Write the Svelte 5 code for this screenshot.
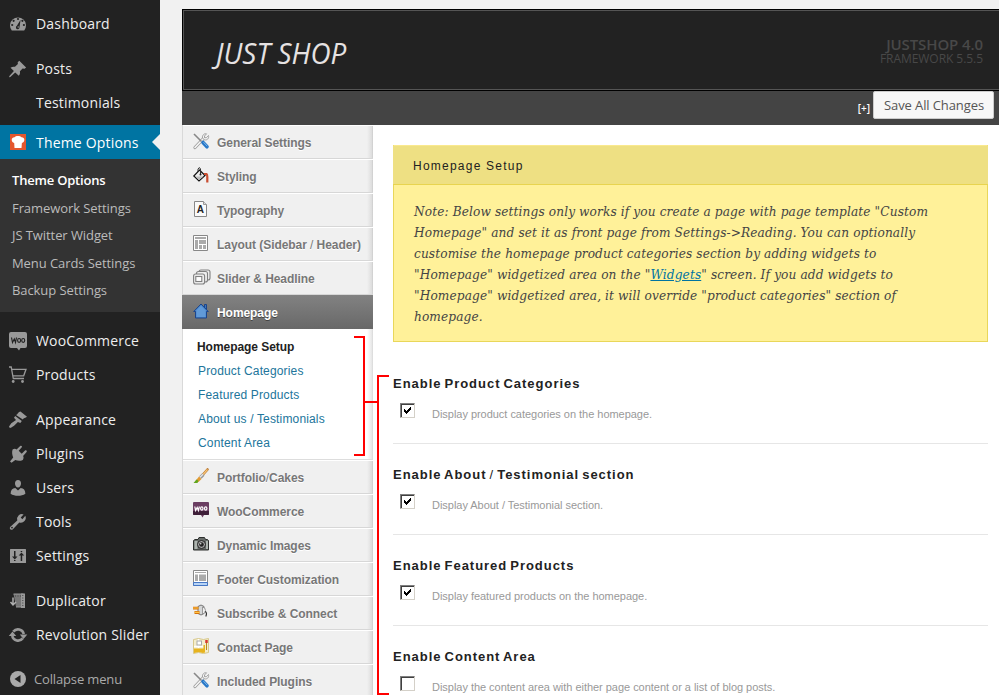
<script>
  const glyphs = {
    dashboard: '<path fill="#999" d="M3.800 16.500A8 8 0 1 1 16.200 16.500Z"/><g fill="#222"><circle cx="10" cy="5" r="1.100"/><circle cx="5.600" cy="6.800" r="1.100"/><circle cx="4.200" cy="11" r="1.100"/><circle cx="15.900" cy="11" r="1.100"/><circle cx="14.400" cy="6.800" r="1.100"/><path d="M12.600 5.800l-3.700 6a1.800 1.800 0 1 0 2.600 1.500z"/></g><circle cx="10.200" cy="13" r=".7" fill="#999"/>',
    pin: '<path fill="#999" d="M11.300 1.800l6.800 6.700-1.500 1.200-2-.2-2.700 2.800c.4 1.700 0 3.300-1.100 4.400L7.200 13.400l-4.900 4.500-1.200.3.300-1.200 4.500-4.900L2.500 8.800c1.300-1.100 3-1.400 4.500-1l2.900-2.700-.2-1.900z"/>',
    chef: '<path fill="#e4572e" d="M2 2h16v16H2z"/><path fill="#fff" d="M6.200 11C2.800 10 3 5.300 6.500 5.300c1.200-1.800 5.700-1.800 7 0 3.700 0 3.800 4.700.4 5.700l-.4 5h-7z"/>',
    woo: '<path fill="#999" d="M3 1h14q2 0 2 2v12q0 2-2 2h-4.500L11 19.500 9 17H3q-2 0-2-2V3q0-2 2-2z"/><g fill="none" stroke="#222" stroke-width="1.150"><path d="M3.500 6.500l1 5 1.800-3.600 1.200 3.600 1-5"/><ellipse cx="11.100" cy="9.400" rx="1.500" ry="1.900"/><ellipse cx="15.200" cy="9.400" rx="1.500" ry="1.900"/></g>',
    cart: '<g fill="none" stroke="#999" stroke-width="1.300"><path d="M1 2h2.200L5.300 13.500H16"/><path d="M3.700 4.300H18l-2.300 6.500H4.900"/></g><circle cx="5.200" cy="16.500" r="1.400" fill="#999"/><circle cx="14.500" cy="16.500" r="1.400" fill="#999"/>',
    brush: '<path fill="#999" d="M8 5c1.500-.3 2.400-3.500 4.500-3.600l6.500 5.300c-1.500 1.600-3.500.9-4.200 2.900zM7.200 6l6.600 5-1.500 2-2.400-1-4.100 4c-1.300.7-2.600 1.900-4 1.900L1 16.500l2.300-3.300L8 10 6 7.700z"/>',
    plug: '<path fill="#999" d="M4.600 5.500c1.500-1 3-.8 4-.1l3.600-3.500c1.200-.8 2.300.3 1.600 1.400l-3.100 3.500 3 3 3.300-3.200c1.200-.8 2.400.3 1.600 1.400l-3.500 3.900c.8 1.400.5 2.800-.3 4-2.700 1.300-5.500.8-7.500.2l-3.800 2.700-1.500-1.300 3.200-4c-1-2.800-1.500-5.400-.6-8z"/>',
    user: '<path fill="#999" d="M10 2c2 0 3 1.500 3 3.500S11.700 9.500 10 9.500 7 7.500 7 5.500 8 2 10 2zM7.300 10l2.700 2.500 2.700-2.500c3 .3 4.500 2 4.700 5.700-4 2.800-10.800 2.800-14.800 0 .2-3.700 1.700-5.400 4.700-5.700z"/>',
    wrench: '<path fill="#999" d="M17.300 3.800a4.900 4.900 0 0 1-6 6.700l-6.400 6.700c-2 1.700-4.200-.5-2.500-2.500l6.900-6.200a4.900 4.900 0 0 1 6.300-6.100L12.700 5.500l1.700 1.700z"/><circle cx="4" cy="15.600" r=".9" fill="#222"/>',
    sliders: '<path fill="#999" d="M2.500 3h15q.5 0 .5.500v13q0 .5-.5.500h-15q-.5 0-.5-.500v-13q0-.5.500-.5z"/><path fill="#222" d="M6 5h1.500v5.500h2L6.800 13.500 4 10.500h2zM6 14h1.500v1H6zM12.700 15V9.500h-2L13.500 6.500l2.700 3h-2V15zM12.700 5h1.500v1h-1.500z"/>',
    duplicator: '<path fill="#777" stroke="#999" d="M5.500 3h10v13H8"/><path fill="#999" d="M13 2.500h4V17h-4z"/><path stroke="#444" stroke-dasharray="1 1.500" d="M14.800 4v12M7 5h6"/><path fill="none" stroke="#b0b0b0" stroke-width="1.500" d="M5 6.500v7M2.500 11L5 14l3-3"/>',
    cycle: '<g fill="none" stroke="#999" stroke-width="2.600"><path d="M5.300 6.600A6 6 0 0 1 15.800 9M14.700 13.400A6 6 0 0 1 4.200 11"/></g><path fill="#999" d="M.8 11L4.500 6.500 8.200 11zM11.800 9.500h7.500L15.500 14z"/>',
    collapse: '<circle cx="10" cy="10" r="8" fill="#aaa"/><path fill="#222" d="M12.500 6v8L6.500 10z"/>'
  };

  const icons = {
    tools: '<path fill="none" stroke="#999" stroke-width="3.200" stroke-linecap="round" d="M2 14.500L10.500 5.500"/><path fill="none" stroke="#f4f4f4" stroke-width="1.700" stroke-linecap="round" d="M2 14.500L10.500 5.500"/><path fill="#f4f4f4" stroke="#999" stroke-width=".9" d="M13.500.8L11.500 3v1.700h2L15.500 2.500c.8 3-1.500 5-4 4.300L9.500 5C9 2.500 11 .2 13.500.8z"/><path stroke="#888" stroke-width="1.600" d="M1 1l7.500 7.500"/><path stroke="#2878c8" stroke-width="3.600" stroke-linecap="round" d="M10 9.500l4 4.300"/><path stroke="#82b8ea" d="M10.500 9.200l3.800 4"/>',
    paint: '<path fill="#eee" stroke="#111" stroke-width="1.200" d="M6.500 3L12 8.500 6 14 .8 9z"/><path fill="#bbb" d="M3 9.500h7.500L6 13z"/><path fill="none" stroke="#333" d="M5 5V2q1.500-3 2.500 0v5"/><circle cx="7.500" cy="7.500" r="1" fill="#222"/><path fill="none" stroke="#c94d31" stroke-width="2.200" d="M11 7h2.500q.8.500.8 3v5.500"/>',
    type: '<path fill="#fafafa" stroke="#888" d="M1.500.5h9l3 3v12h-12z"/><path fill="#ddd" stroke="#999" d="M10.500.5v3h3"/><text x="7.300" y="11.700" text-anchor="middle" font-family="Liberation Sans" font-size="10" font-weight="bold" fill="#222">A</text>',
    layout: '<path fill="#fff" stroke="#888" d="M.5.5h14v15H.5z"/><path fill="#aaa" d="M2 2h11v2H2zM2 5h3v9H2zM6 5h7v4H6zM6 10h3v4H6zM10 10h3v4h-3z"/>',
    slider: '<g fill="#eee" stroke="#808080" stroke-width="1.100"><rect x="6" y="1" width="11" height="10" rx="2"/><rect x="3.500" y="2.500" width="11" height="10.500" rx="2"/><rect x=".6" y="5" width="11" height="10" rx="2"/><rect x="2.800" y="7.500" width="6" height="5" fill="#fff"/></g>',
    home: '<path fill="#3e78bd" stroke="#1c458b" d="M11.500 1.500h2v5h-2z"/><path fill="#4b87cc" stroke="#1c458b" d="M8 1L15.300 8.500H13.500V15h-11V8.500H.7z"/><path fill="#78aee4" d="M8 2.700l4.500 4.500V14h-9V7.200z" opacity=".5"/>',
    brush: '<path stroke="#ba762d" stroke-width="2.600" stroke-linecap="round" d="M14.500 1.500L10 6.500"/><path stroke="#f6c476" stroke-width="1.200" d="M14.500 1.500L10 6.500"/><path stroke="#999" stroke-width="3.400" d="M10.300 6.500l-3 3"/><path stroke="#e5e5e5" stroke-width="1.300" d="M10 6.300l-3 3"/><path fill="#e29a33" d="M6 8.500l2.500 2.500L5.500 14l-3-1z"/><path fill="#62a51d" d="M3.500 11.500l2 1.200-1 2.300H.5z"/>',
    woo: '<path fill="#6b3d62" d="M1 0h14q1 0 1 1v11q0 1-1 1h-4l-1.500 2.500L8 13H1q-1 0-1-1V1q0-1 1-1z"/><path fill="#3f1f39" d="M0 9h16v3q0 1-1 1H1q-1 0-1-1z"/><g fill="none" stroke="#fff" stroke-width="1.200"><path d="M1.800 4.500l.8 4 1.600-3 1.200 3 1-4"/><ellipse cx="8.800" cy="6.500" rx="1.200" ry="1.600"/><ellipse cx="12.700" cy="6.500" rx="1.200" ry="1.600"/></g>',
    camera: '<path fill="#666b68" stroke="#2c2f2d" d="M.5 4.500L2 3.500h3L6 1.500h5.500l1 2h2l1 1v9.500H.5z"/><path fill="#aeb5b0" d="M1.500 5h3v8h-3zM13 5h2v8h-2z"/><circle cx="8.500" cy="8.500" r="4" fill="#aaa" stroke="#222"/><circle cx="8.500" cy="8.500" r="2.300" fill="#222"/><circle cx="7.700" cy="7.700" r=".8" fill="#ddd"/>',
    footer: '<path fill="#fff" stroke="#888" d="M.5.5h14v15H.5z"/><path fill="#aaa" d="M2 2h11v1H2zM2 4.500h3V11H2zM6 4.500h7V11H6z"/><path fill="#b8d4f5" stroke="#4677c5" d="M.5 12.500h14v3H.5z"/>',
    plug: '<path fill="#d4d6d7" stroke="#777" d="M5 2.500Q8-.5 11 2.500v7q-3 3-6 0z"/><path fill="#eee" stroke="#888" stroke-width=".8" d="M9.500 3q3 .5 3 3.500t-3 3.500z"/><path fill="none" stroke="#333" stroke-width="1.200" d="M12 7.500q2.500 1 .8 5"/><path stroke="#d5720c" stroke-width="2.800" d="M0 4.200h5.500M1.500 8.500H6.500"/><path stroke="#ffc547" stroke-width="1.200" d="M0 4h5.500M1.500 8.300H6.500"/>',
    map: '<path fill="#f4edcb" stroke="#d8c88c" d="M.5 1.500l5-1 5 1 5-1v14l-5 1-5-1-5 1z"/><path fill="#e7b31e" d="M1 10.500h9.500V7H12v7.500l-2 .5-4.500-1-4.500 1z"/><path stroke="#fff" stroke-width="1.500" d="M5.500 1v9M1 8.500h9"/><rect x="4" y="3" width="4.500" height="4" fill="#fff" stroke="#aaa"/><path stroke="#d7362e" stroke-width="2.500" d="M13.500 2v3"/><path stroke="#b58922" d="M13.500 5v7"/>'
  };

  const mainMenu = [
    [{ label: 'Dashboard', icon: 'dashboard' }],
    [{ label: 'Posts', icon: 'pin' }, { label: 'Testimonials' }]
  ];
  const optionPages = ['Theme Options', 'Framework Settings', 'JS Twitter Widget', 'Menu Cards Settings', 'Backup Settings'];
  const lowerMenu = [
    [{ label: 'WooCommerce', icon: 'woo' }, { label: 'Products', icon: 'cart' }],
    [
      { label: 'Appearance', icon: 'brush' },
      { label: 'Plugins', icon: 'plug' },
      { label: 'Users', icon: 'user' },
      { label: 'Tools', icon: 'wrench' },
      { label: 'Settings', icon: 'sliders' }
    ],
    [{ label: 'Duplicator', icon: 'duplicator' }, { label: 'Revolution Slider', icon: 'cycle' }]
  ];

  const navTop = [
    ['General Settings', 'tools'],
    ['Styling', 'paint'],
    ['Typography', 'type'],
    ['Layout (Sidebar / Header)', 'layout'],
    ['Slider & Headline', 'slider']
  ];
  const homeLinks = ['Homepage Setup', 'Product Categories', 'Featured Products', 'About us / Testimonials', 'Content Area'];
  const navBottom = [
    ['Portfolio/Cakes', 'brush'],
    ['WooCommerce', 'woo'],
    ['Dynamic Images', 'camera'],
    ['Footer Customization', 'footer'],
    ['Subscribe & Connect', 'plug'],
    ['Contact Page', 'map'],
    ['Included Plugins', 'tools']
  ];

  const settings = [
    { title: 'Enable Product Categories', text: 'Display product categories on the homepage.', on: true },
    { title: 'Enable About / Testimonial section', text: 'Display About / Testimonial section.', on: true },
    { title: 'Enable Featured Products', text: 'Display featured products on the homepage.', on: true },
    { title: 'Enable Content Area', text: 'Display the content area with either page content or a list of blog posts.', on: false }
  ];
</script>

{#snippet adminItem(item)}
  <a class="item" href="#menu">
    <svg class="glyph" viewBox="0 0 20 20">{@html item.icon ? glyphs[item.icon] : ''}</svg>
    <span>{item.label}</span>
  </a>
{/snippet}

{#snippet lightSlash(label)}{#each label.split(/(\/)/) as part}{#if part === '/'}<i class="slash">/</i>{:else}{part}{/if}{/each}{/snippet}

{#snippet navItem(label, icon, current)}
  <a class="nav-row" class:current href="#section">
    <svg class="nav-icon" viewBox="0 0 16 16">{@html icons[icon]}</svg>
    <span>{@render lightSlash(label)}</span>
  </a>
{/snippet}

<div class="page">
  <aside class="admin">
    {#each mainMenu as group}
      <div class="group">
        {#each group as item}{@render adminItem(item)}{/each}
      </div>
    {/each}
    <div class="active-item">{@render adminItem({ label: 'Theme Options', icon: 'chef' })}</div>
    <div class="submenu">
      {#each optionPages as page, i}
        <a href="#page" class:bold={i === 0}>{page}</a>
      {/each}
    </div>
    {#each lowerMenu as group}
      <div class="group">
        {#each group as item}{@render adminItem(item)}{/each}
      </div>
    {/each}
    <div class="collapse">{@render adminItem({ label: 'Collapse menu', icon: 'collapse' })}</div>
  </aside>

  <main>
    <header>
      <div class="brand">JUST SHOP</div>
      <div class="version"><b>JUSTSHOP 4.0</b><span>FRAMEWORK 5.5.5</span></div>
    </header>
    <div class="bar">
      <span class="expand">[+]</span>
      <button>Save All Changes</button>
    </div>
    <div class="body">
      <nav>
        {#each navTop as [label, icon]}{@render navItem(label, icon, false)}{/each}
        {@render navItem('Homepage', 'home', true)}
        <div class="home-links">
          {#each homeLinks as link, i}
            <a href="#link" class:bold={i === 0}>{link}</a>
          {/each}
        </div>
        {#each navBottom as [label, icon]}{@render navItem(label, icon, false)}{/each}
      </nav>
      <section class="content">
        <div class="note">
          <h3>Homepage Setup</h3>
          <p>
            Note: Below settings only works if you create a page with page template "Custom<br />
            Homepage" and set it as front page from Settings-&gt;Reading. You can optionally<br />
            customise the homepage product categories section by adding widgets to<br />
            "Homepage" widgetized area on the "<a href="#widgets">Widgets</a>" screen. If you add widgets to<br />
            "Homepage" widgetized area, it will override "product categories" section of<br />
            homepage.
          </p>
        </div>
        {#each settings as s}
          <div class="setting">
            <h4>{@render lightSlash(s.title)}</h4>
            <div class="control">
              <span class="check">
                {#if s.on}
                  <svg viewBox="0 0 7 7" width="7" height="7" shape-rendering="crispEdges"><path d="M0 2h1v1h1v1h1v-1h1v-1h1v-1h1v-1h1v3h-1v1h-1v1h-1v1h-1v1h-1v-1h-1v-1h-1z" /></svg>
                {/if}
              </span>
              <span class="desc">{s.text}</span>
            </div>
          </div>
        {/each}
      </section>
    </div>
  </main>

  <svg class="bracket" viewBox="0 0 36 359" width="36" height="359" shape-rendering="crispEdges">
    <path d="M0 1H10V119H0M10 66H24M35 40H24V358H35" fill="none" stroke="#f00" stroke-width="2" />
  </svg>
</div>

<style>
  :global(body) { margin: 0; }
  .page { position: relative; display: flex; width: 999px; height: 695px; overflow: hidden; background: #f1f1f1; font-family: "Liberation Sans", Arial, sans-serif; }
  a { text-decoration: none; color: inherit; white-space: nowrap; }

  .admin { width: 160px; flex: none; padding-top: 7px; box-sizing: border-box; background: #222; font: 14px/34px "Open Sans", sans-serif; letter-spacing: .18px; color: #eee; }
  .group { margin-bottom: 11px; }
  .group + .active-item { margin-top: -6px; }
  .item { display: flex; height: 34px; align-items: center; padding-left: 8px; }
  .item span { margin-left: 8px; }
  .glyph { width: 20px; height: 20px; flex: none; }
  .active-item { position: relative; background: #0074a2; color: #fff; }
  .active-item::after { content: ""; position: absolute; right: 0; top: 9px; border: 8px solid transparent; border-left: 0; border-right-color: #f1f1f1; }
  .active-item span { padding-top: 1px; }
  .submenu { height: 153px; box-sizing: border-box; padding: 8px 0 0 12px; margin-bottom: 12px; background: #333; font-size: 13px; line-height: 27.500px; letter-spacing: -.08px; color: #bbb; }
  .submenu a { display: block; }
  .submenu .bold { color: #fff; font-weight: 600; letter-spacing: -.2px; }
  .collapse { margin-top: -1px; font-size: 13px; letter-spacing: -.15px; color: #aaa; }
  .collapse :global(.item span) { margin-left: 6px; }

  main { flex: 1; margin-left: 22px; padding-top: 9px; min-width: 0; }
  header { display: flex; justify-content: space-between; height: 82px; box-sizing: border-box; border: 1px solid #000; border-right: 0; background: #222; box-shadow: inset 1px 1px #555, inset 0 -1px #555; }
  .brand { margin: 23px 0 0 33px; font: italic 29px/40px "Open Sans", sans-serif; color: #e6e2e2; transform: scaleX(.96); transform-origin: 0 0; }
  .version { display: flex; flex-direction: column; align-items: flex-end; padding: 27px 16px 0 0; font-family: "Open Sans", sans-serif; color: #484848; }
  .version b { font-size: 15px; line-height: 15px; font-weight: 600; letter-spacing: -.1px; }
  .version span { font-size: 12px; line-height: 14px; letter-spacing: -.05px; }
  .bar { display: flex; justify-content: flex-end; height: 34px; padding-right: 5px; background: #444; font-family: "Open Sans", sans-serif; }
  .expand { margin: 8px 3px 0 0; font-size: 10px; font-weight: 600; line-height: 18px; color: #fff; }
  button { width: 121px; height: 28px; padding: 0 0 0 1px; border: 1px solid #ccc; border-radius: 2px; background: #f7f7f7; font: 13px/24px "Open Sans", sans-serif; letter-spacing: -.1px; color: #555; white-space: nowrap; }

  .body { display: flex; height: 570px; background: #fff; }
  nav { width: 191px; flex: none; box-sizing: border-box; border-left: 1px solid #d9d9d9; }
  .nav-row { display: flex; height: 34px; box-sizing: border-box; padding-left: 10px; border-top: 1px solid #fff; border-bottom: 1px solid #d7d7d7; background: linear-gradient(90deg, #f0f0f0 184px, #ddd 189px, #c8c8c8 190px); font-size: 12px; font-weight: bold; line-height: 34px; letter-spacing: -.06px; color: #777; text-shadow: 0 1px #fff; }
  .nav-row span { margin-left: 8px; }
  .slash { font-style: normal; font-weight: normal; }
  .nav-icon { width: 16px; height: 16px; margin-top: 7px; overflow: visible; flex: none; }
  .current { margin-left: -1px; padding-left: 11px; border: 0; line-height: 36px; background: linear-gradient(#828282, #686868); color: #fff; text-shadow: 0 1px #444; }
  .current .nav-icon { margin-top: 8px; }
  .home-links { height: 131px; box-sizing: border-box; padding: 6px 0 0 15px; border-bottom: 1px solid #ddd; background: linear-gradient(90deg, #fff 184px, #e6e6e6 189px, #d5d5d5 190px); font-size: 12px; line-height: 24px; letter-spacing: .16px; color: #21759b; }
  .home-links a { display: block; }
  .home-links .bold { margin-left: -1px; letter-spacing: -.05px; color: #222; font-weight: bold; }

  .content { flex: 1; padding: 20px 11px 0 20px; }
  .note { height: 197px; box-sizing: border-box; border: 1px solid #e9d75a; border-top-color: #fae98e; background: #fff199; }
  .note h3 { height: 38px; margin: 0 -1px; padding-left: 20px; border-bottom: 1px solid #e8d44f; background: #eee083; font-size: 12px; font-weight: normal; line-height: 40px; letter-spacing: 1.230px; color: #222; }
  .note p { margin: 16px 0 0 20px; font: italic 13.500px/21px "DejaVu Serif Condensed", "DejaVu Serif", serif; font-stretch: condensed; letter-spacing: .12px; white-space: nowrap; color: #444; }
  .note p a { color: #0074a2; text-decoration: underline; }
  .setting { height: 91px; box-sizing: border-box; border-bottom: 1px solid #e6e6e6; }
  .note + .setting { margin-top: 11px; }
  .setting h4 { margin: 0; padding-top: 21px; font-size: 13px; line-height: 20px; letter-spacing: .97px; word-spacing: -1.500px; color: #222; white-space: nowrap; }
  .control { display: flex; margin-left: 7px; padding-top: 9px; }
  .check { display: flex; align-items: center; justify-content: center; width: 15px; height: 15px; box-sizing: border-box; border: 1px solid; border-color: #808080 #d4d0c8 #d4d0c8 #808080; box-shadow: inset 1px 1px #404040; }
  .desc { margin: 4px 0 0 17px; font-size: 11px; line-height: 14px; letter-spacing: -.03px; color: #999; white-space: nowrap; }
  .bracket { position: absolute; left: 354px; top: 336px; }
</style>
